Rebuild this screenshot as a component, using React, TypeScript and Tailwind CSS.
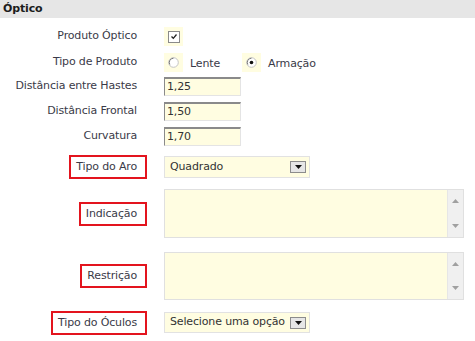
import React from 'react';

const font = { fontFamily: '"DejaVu Sans", Verdana, sans-serif' };

function Label({ text, marked }: { text: string; marked?: boolean }) {
  if (!marked) return <span className="text-right pr-[1px]">{text}</span>;
  return (
    <span className="border-[2.5px] border-[#e3141e] pl-[5px] pr-[8px] py-[3px] -mr-[9px] leading-[14px]">{text}</span>
  );
}

function Row({ label, marked, h, mt, children }: { label: string; marked?: boolean; h: number; mt: number; children: React.ReactNode }) {
  return (
    <div className="flex items-center" style={{ height: h, marginTop: mt }}>
      <div className="w-[138px] shrink-0 flex justify-end whitespace-nowrap">
        <Label text={label} marked={marked} />
      </div>
      <div className="ml-[26px] flex items-center h-full">{children}</div>
    </div>
  );
}

function TextInput({ value }: { value: string }) {
  return (
    <div className="w-[77px] h-[19px] bg-[#fffde1] border-t-2 border-l border-t-[#8a8a8a] border-l-[#8a8a8a] border-r border-b border-r-[#e4e4e4] border-b-[#e4e4e4] pl-[2px] leading-[16px] text-[#333]">
      {value}
    </div>
  );
}

function DropBtn() {
  return (
    <span className="w-[16px] h-[12px] shrink-0 bg-[#e6e6e6] border border-[#8c8c8c] flex items-center justify-center">
      <svg width="7" height="4" viewBox="0 0 7 4"><path d="M0 0h7L3.5 4z" fill="#111" /></svg>
    </span>
  );
}

function Select({ value, h }: { value: string; h: number }) {
  return (
    <div className="w-[146px] bg-[#fffde1] border border-[#e2e2e2] flex items-center justify-between pl-[5px] pr-[3px] text-[#333] whitespace-nowrap" style={{ height: h }}>
      <span>{value}</span>
      <DropBtn />
    </div>
  );
}

function TextArea({ h }: { h: number }) {
  return (
    <div className="w-[300px] bg-[#fffde1] border border-[#e0e0e0] flex" style={{ height: h }}>
      <div className="flex-1" />
      <div className="w-[16px] bg-[#f0f0f0] border-l border-[#e6e6e6] flex flex-col items-center justify-between py-[9px]">
        <svg width="7" height="4" viewBox="0 0 7 4"><path d="M3.5 0L7 4H0z" fill="#a0a0a0" /></svg>
        <svg width="7" height="4" viewBox="0 0 7 4"><path d="M0 0h7L3.5 4z" fill="#a0a0a0" /></svg>
      </div>
    </div>
  );
}

function Radio({ checked }: { checked?: boolean }) {
  return (
    <span className="w-[19px] h-[19px] bg-[#fffde1] flex items-center justify-center">
      <svg width="11" height="11" viewBox="0 0 11 11">
        <circle cx="5.5" cy="5.5" r="4.8" fill="#fff" stroke="#c4c4c4" />
        <path d="M1.8 7.5A4.3 4.3 0 0 1 5.5 1.2" stroke="#7a7a7a" fill="none" />
        {checked && <circle cx="5.5" cy="5.5" r="1.8" fill="#111" />}
      </svg>
    </span>
  );
}

export default function App() {
  return (
    <div className="w-[475px] h-[341px] bg-white text-[11px] text-[#3a3a48] tracking-[-0.15px]" style={font}>
      <div className="h-[18px] bg-[#e6e6e6] flex items-center pl-[3px] font-bold text-[11px] text-[#1c1c1c]">Óptico</div>

      <Row label="Produto Óptico" h={19} mt={9}>
        <span className="w-[19px] h-[19px] bg-[#fffde1] flex items-center justify-center">
          <span className="w-[12px] h-[12px] bg-white border border-[#8a8a8a] flex items-center justify-center">
            <svg width="8" height="7" viewBox="0 0 8 7"><path d="M1.5 3.5l1.8 1.8L6.5 1.5" stroke="#222" strokeWidth="1.3" fill="none" /></svg>
          </span>
        </span>
      </Row>

      <Row label="Tipo de Produto" h={19} mt={7}>
        <Radio />
        <span className="ml-[7px] mt-[4px]">Lente</span>
        <span className="ml-[22px]"><Radio checked /></span>
        <span className="ml-[7px] mt-[4px]">Armação</span>
      </Row>

      <Row label="Distância entre Hastes" h={19} mt={5}>
        <TextInput value="1,25" />
      </Row>
      <Row label="Distância Frontal" h={19} mt={6}>
        <TextInput value="1,50" />
      </Row>
      <Row label="Curvatura" h={19} mt={6}>
        <TextInput value="1,70" />
      </Row>

      <Row label="Tipo do Aro" marked h={22} mt={10}>
        <Select value="Quadrado" h={22} />
      </Row>

      <Row label="Indicação" marked h={49} mt={11}>
        <TextArea h={49} />
      </Row>

      <Row label="Restrição" marked h={48} mt={14}>
        <TextArea h={48} />
      </Row>

      <Row label="Tipo do Óculos" marked h={21} mt={12}>
        <Select value="Selecione uma opção" h={21} />
      </Row>
    </div>
  );
}
